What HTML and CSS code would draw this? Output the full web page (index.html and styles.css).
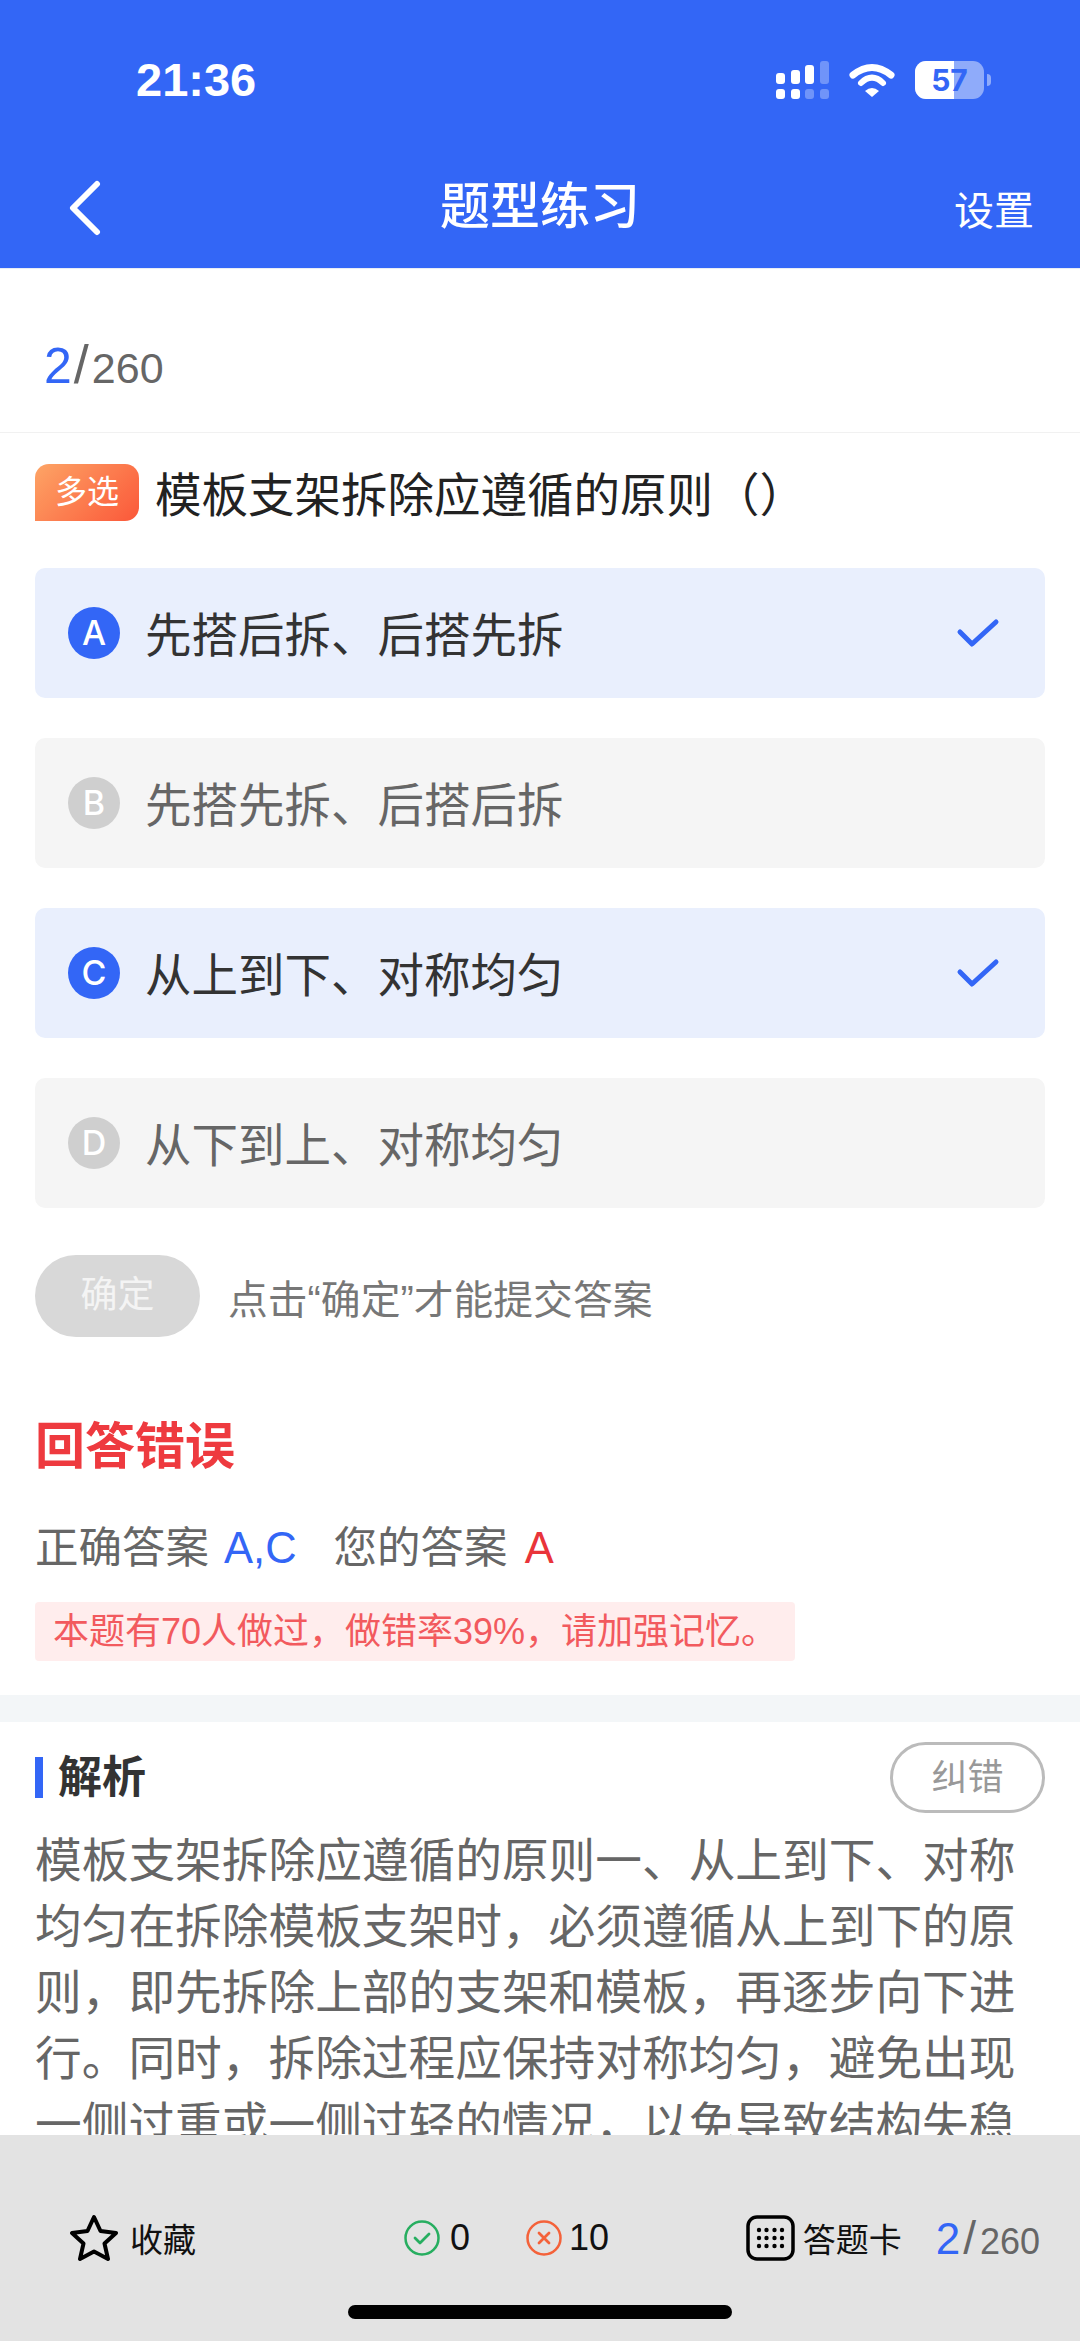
FILE: index.html
```html
<!DOCTYPE html>
<html lang="zh-CN">
<head>
    <meta charset="UTF-8">
    <meta name="viewport" content="width=device-width, initial-scale=1.0">
    <title>题型练习</title>
    <link rel="stylesheet" href="styles.css">
</head>
<body>

    <div id="app">
        <!-- Blue header with status bar -->
        <div class="header">
            <div class="status-bar">
                <span class="time">21:36</span>
                <div class="status-icons">
                    <svg width="53" height="38" viewBox="0 0 53 38">
                        <rect x="0" y="12" width="9" height="11" rx="3" fill="#fff"/>
                        <rect x="15" y="9" width="9" height="14" rx="3" fill="#fff"/>
                        <rect x="29" y="4" width="9" height="19" rx="3" fill="#fff"/>
                        <rect x="44" y="0" width="9" height="23" rx="3" fill="#fff" opacity="0.3"/>
                        <rect x="0" y="28" width="9" height="10" rx="3" fill="#fff"/>
                        <rect x="15" y="28" width="9" height="10" rx="3" fill="#fff"/>
                        <rect x="29" y="28" width="9" height="10" rx="3" fill="#fff" opacity="0.3"/>
                        <rect x="44" y="28" width="9" height="10" rx="3" fill="#fff" opacity="0.3"/>
                    </svg>
                    <svg width="46" height="34" viewBox="0 0 46 34">
                        <path d="M4 12 Q23 -3 42 12" fill="none" stroke="#fff" stroke-width="7" stroke-linecap="round"/>
                        <path d="M12 20 Q23 9 34 20" fill="none" stroke="#fff" stroke-width="6" stroke-linecap="round"/>
                        <path d="M16 28 Q23 22 30 28 L23 34 Z" fill="#fff"/>
                    </svg>
                    <div class="battery">
                        <div class="battery-fill"></div>
                        <span class="battery-num">57</span>
                        <span class="battery-cap"></span>
                    </div>
                </div>
            </div>
            <div class="nav-bar">
                <svg class="back" width="36" height="56" viewBox="0 0 36 56">
                    <path d="M31 4 L7 28 L31 52" fill="none" stroke="#fff" stroke-width="6" stroke-linecap="round" stroke-linejoin="round"/>
                </svg>
                <span class="nav-title">题型练习</span>
                <span class="nav-right">设置</span>
            </div>
        </div>

        <div class="progress-row">
            <span class="count"><b>2</b><i>/</i>260</span>
        </div>

        <div class="question">
            <div class="question-title">
                <span class="tag">多选</span>
                <span class="title-text">模板支架拆除应遵循的原则（）</span>
            </div>

            <div class="option selected">
                <span class="letter">A</span>
                <span class="option-text">先搭后拆、后搭先拆</span>
                <svg class="tick" width="44" height="32" viewBox="0 0 44 32">
                    <path d="M4 15 L16 27 L40 5" fill="none" stroke="#3366f6" stroke-width="5" stroke-linecap="round" stroke-linejoin="round"/>
                </svg>
            </div>
            <div class="option">
                <span class="letter">B</span>
                <span class="option-text">先搭先拆、后搭后拆</span>
            </div>
            <div class="option selected">
                <span class="letter">C</span>
                <span class="option-text">从上到下、对称均匀</span>
                <svg class="tick" width="44" height="32" viewBox="0 0 44 32">
                    <path d="M4 15 L16 27 L40 5" fill="none" stroke="#3366f6" stroke-width="5" stroke-linecap="round" stroke-linejoin="round"/>
                </svg>
            </div>
            <div class="option">
                <span class="letter">D</span>
                <span class="option-text">从下到上、对称均匀</span>
            </div>

            <div class="submit-row">
                <span class="submit-btn">确定</span>
                <span class="submit-hint">点击“确定”才能提交答案</span>
            </div>

            <div class="result-title">回答错误</div>
            <div class="answer-row">
                正确答案 <span class="blue">A,C</span><span class="your-answer">您的答案 <span class="red">A</span></span>
            </div>
            <div class="stat-note">本题有70人做过，做错率39%，请加强记忆。</div>
        </div>

        <div class="divider"></div>

        <div class="analysis">
            <div class="analysis-head">
                <span class="analysis-title">解析</span>
                <span class="report-btn">纠错</span>
            </div>
            <p class="analysis-text">模板支架拆除应遵循的原则一、从上到下、对称均匀在拆除模板支架时，必须遵循从上到下的原则，即先拆除上部的支架和模板，再逐步向下进行。同时，拆除过程应保持对称均匀，避免出现一侧过重或一侧过轻的情况，以免导致结构失稳</p>
        </div>

        <!-- Bottom toolbar -->
        <div class="toolbar">
            <div class="toolbar-row">
                <div class="tool fav">
                    <svg width="48" height="48" viewBox="0 0 48 48">
                        <path d="M24 3 L30.500 17 L46 19 L34.500 29.500 L38 45 L24 37.500 L10 45 L13.500 29.500 L2 19 L17.500 17 Z" fill="none" stroke="#000" stroke-width="4" stroke-linejoin="round"/>
                    </svg>
                    <span class="fav-label">收藏</span>
                </div>
                <div class="tool right-count">
                    <svg width="36" height="36" viewBox="0 0 36 36">
                        <circle cx="18" cy="18" r="16.5" fill="none" stroke="#27ae60" stroke-width="2.5"/>
                        <path d="M11 18 L16 23 L25 14" fill="none" stroke="#27ae60" stroke-width="2.8" stroke-linecap="round" stroke-linejoin="round"/>
                    </svg>
                    <span class="num">0</span>
                </div>
                <div class="tool wrong-count">
                    <svg width="36" height="36" viewBox="0 0 36 36">
                        <circle cx="18" cy="18" r="16.5" fill="none" stroke="#f4623a" stroke-width="2.5"/>
                        <path d="M13 13 L23 23 M23 13 L13 23" fill="none" stroke="#f4623a" stroke-width="2.8" stroke-linecap="round"/>
                    </svg>
                    <span class="num">10</span>
                </div>
                <div class="tool card">
                    <svg width="49" height="46" viewBox="0 0 49 46">
                        <rect x="2" y="2" width="45" height="42" rx="9" fill="none" stroke="#000" stroke-width="3.5"/>
                        <g fill="#000">
                            <circle cx="13" cy="15" r="2.2"/><circle cx="20.500" cy="15" r="2.2"/><circle cx="28.500" cy="15" r="2.2"/><circle cx="36" cy="15" r="2.2"/>
                            <circle cx="13" cy="23" r="2.2"/><circle cx="20.500" cy="23" r="2.2"/><circle cx="28.500" cy="23" r="2.2"/><circle cx="36" cy="23" r="2.2"/>
                            <circle cx="13" cy="31" r="2.2"/><circle cx="20.500" cy="31" r="2.2"/><circle cx="28.500" cy="31" r="2.2"/><circle cx="36" cy="31" r="2.2"/>
                        </g>
                    </svg>
                    <span class="card-label">答题卡</span>
                    <span class="count small"><b>2</b><i>/</i>260</span>
                </div>
            </div>
            <div class="home-bar"></div>
        </div>
    </div>

</body>
</html>
```

FILE: styles.css
```css
body {
    font-family: "Liberation Sans", "Noto Sans CJK SC", sans-serif;
    background-color: #fff;
    margin: 0;
    padding: 0;
}

#app {
    position: relative;
    width: 1080px;
    height: 2341px;
    overflow: hidden;
}

.header {
    background-color: #3366f6;
    height: 269px;
    color: #fff;
    border-bottom: 1px solid #e8ecf5;
    box-sizing: border-box;
}

.status-bar {
    height: 148px;
    display: flex;
    align-items: flex-start;
    justify-content: space-between;
    padding: 0 96px 0 136px;
}

.time {
    font-size: 47px;
    font-weight: bold;
    line-height: 54px;
    margin-top: 53px;
}

.status-icons {
    display: flex;
    align-items: center;
    gap: 20px;
    margin-top: 61px;
}

.battery {
    position: relative;
    width: 69px;
    height: 38px;
    border-radius: 11px;
    background-color: rgba(255, 255, 255, 0.45);
}

.battery-fill {
    width: 39px;
    height: 38px;
    background-color: #fff;
    border-radius: 11px 0 0 11px;
}

.battery-num {
    position: absolute;
    left: 0;
    top: 0;
    width: 69px;
    text-align: center;
    font-family: Inter, sans-serif;
    font-size: 30px;
    font-weight: bold;
    line-height: 38px;
    color: #3366f6;
}

.battery-cap {
    position: absolute;
    right: -7px;
    top: 13px;
    width: 4px;
    height: 12px;
    background-color: rgba(255, 255, 255, 0.45);
    border-radius: 0 4px 4px 0;
}

.nav-bar {
    height: 116px;
    display: grid;
    grid-template-columns: 1fr auto 1fr;
    align-items: center;
    padding: 0 46px;
}

.back {
    margin: 4px 0 0 20px;
}

.nav-title {
    font-size: 50px;
    font-weight: 500;
    margin-bottom: 8px;
}

.nav-right {
    font-size: 40px;
    justify-self: end;
    margin-top: 3px;
}

.progress-row {
    height: 164px;
    box-sizing: border-box;
    padding: 26px 44px 0;
    display: flex;
    align-items: center;
    border-bottom: 1px solid #f1f1f1;
}

.count {
    font-size: 43px;
    color: #666;
}

.count b {
    font-weight: normal;
    font-size: 50px;
    color: #3366f6;
}

.count i {
    font-style: normal;
    font-size: 54px;
    margin: 0 3px 0 2px;
}

.question {
    padding: 0 35px;
}

.question-title {
    display: flex;
    align-items: center;
    gap: 16px;
    font-size: 46.5px;
    color: #222;
    margin-top: 31px;
    height: 57px;
}

.title-text {
    padding-bottom: 3px;
}

.tag {
    width: 104px;
    height: 57px;
    border-radius: 14px 14px 14px 0;
    background: linear-gradient(135deg, #fda05e, #fb4f2f);
    color: #fff;
    font-size: 32px;
    text-align: center;
    line-height: 57px;
    opacity: 0.95;
}

.option {
    display: flex;
    align-items: center;
    height: 130px;
    margin-bottom: 40px;
    padding: 0 34px 0 33px;
    background-color: #f5f5f5;
    border-radius: 10px;
    color: #666;
    font-size: 46.5px;
}

.question-title + .option {
    margin-top: 47px;
}

.letter {
    width: 52px;
    height: 52px;
    border-radius: 50%;
    background-color: #cfcfcf;
    color: #fff;
    font-family: Inter, sans-serif;
    font-size: 34px;
    font-weight: 500;
    text-align: center;
    line-height: 52px;
    margin-right: 25px;
}

.option-text {
    flex: 1;
    padding-bottom: 4px;
}

.tick {
    margin-right: 11px;
}

.option.selected {
    background-color: #e9effd;
    color: #333;
}

.option.selected .letter {
    background-color: #3366f6;
}

.submit-row {
    display: flex;
    align-items: center;
    margin-top: 47px;
}

.submit-btn {
    width: 165px;
    height: 82px;
    border-radius: 41px;
    background-color: #d8d8d8;
    color: #f4f4f4;
    font-size: 37px;
    text-align: center;
    line-height: 82px;
}

.submit-hint {
    font-size: 39.8px;
    color: #777;
    margin-left: 28px;
}

.result-title {
    font-size: 50px;
    font-weight: bold;
    color: #ee3a3f;
    margin-top: 75px;
    line-height: 70px;
}

.answer-row {
    font-size: 43.5px;
    color: #666;
    margin-top: 36px;
    line-height: 60px;
}

.blue {
    color: #3366f6;
    margin-left: 3px;
}

.red {
    color: #e9343a;
    margin-left: 5px;
}

.your-answer {
    margin-left: 37px;
}

.stat-note {
    width: fit-content;
    margin-top: 24px;
    padding: 0 18px;
    height: 59px;
    line-height: 59px;
    font-size: 36px;
    color: #f25a5e;
    background-color: #ffeded;
    border-radius: 4px;
}

.divider {
    height: 27px;
    background-color: #f3f6f8;
    margin-top: 34px;
}

.analysis {
    padding: 20px 35px 0;
}

.analysis-head {
    display: flex;
    justify-content: space-between;
    align-items: center;
}

.analysis-title {
    border-left: 8px solid #3366f6;
    padding-left: 15px;
    font-size: 44px;
    font-weight: bold;
    line-height: 41px;
    color: #333;
}

.report-btn {
    width: 155px;
    height: 71px;
    box-sizing: border-box;
    border: 3px solid #bbb;
    border-radius: 36px;
    color: #999;
    font-size: 36px;
    text-align: center;
    line-height: 65px;
}

.analysis-text {
    margin: 15px 0 0;
    font-size: 46.7px;
    line-height: 66px;
    color: #666;
}

.toolbar {
    position: absolute;
    left: 0;
    right: 0;
    bottom: 0;
    height: 206px;
    background-color: #e3e3e3;
}

.toolbar-row {
    display: flex;
    align-items: center;
    height: 100px;
    margin-top: 53px;
    padding: 0 40px 0 70px;
    font-size: 32px;
    color: #111;
}

.tool {
    display: flex;
    align-items: center;
    gap: 10px;
}

.fav {
    gap: 12px;
}

.fav-label,
.card-label {
    font-size: 33px;
}

.num {
    font-size: 36px;
}

.right-count {
    margin-left: 208px;
}

.wrong-count {
    margin-left: 56px;
    gap: 7px;
}

.card {
    margin-left: auto;
    gap: 8px;
}

.count.small {
    font-size: 36px;
    margin-left: 26px;
}

.count.small b {
    font-size: 44px;
}

.count.small i {
    font-size: 46px;
    margin: 0 4px 0 3px;
}

.home-bar {
    width: 384px;
    height: 14px;
    background-color: #000;
    border-radius: 7px;
    margin: 17px auto 0;
}
```
